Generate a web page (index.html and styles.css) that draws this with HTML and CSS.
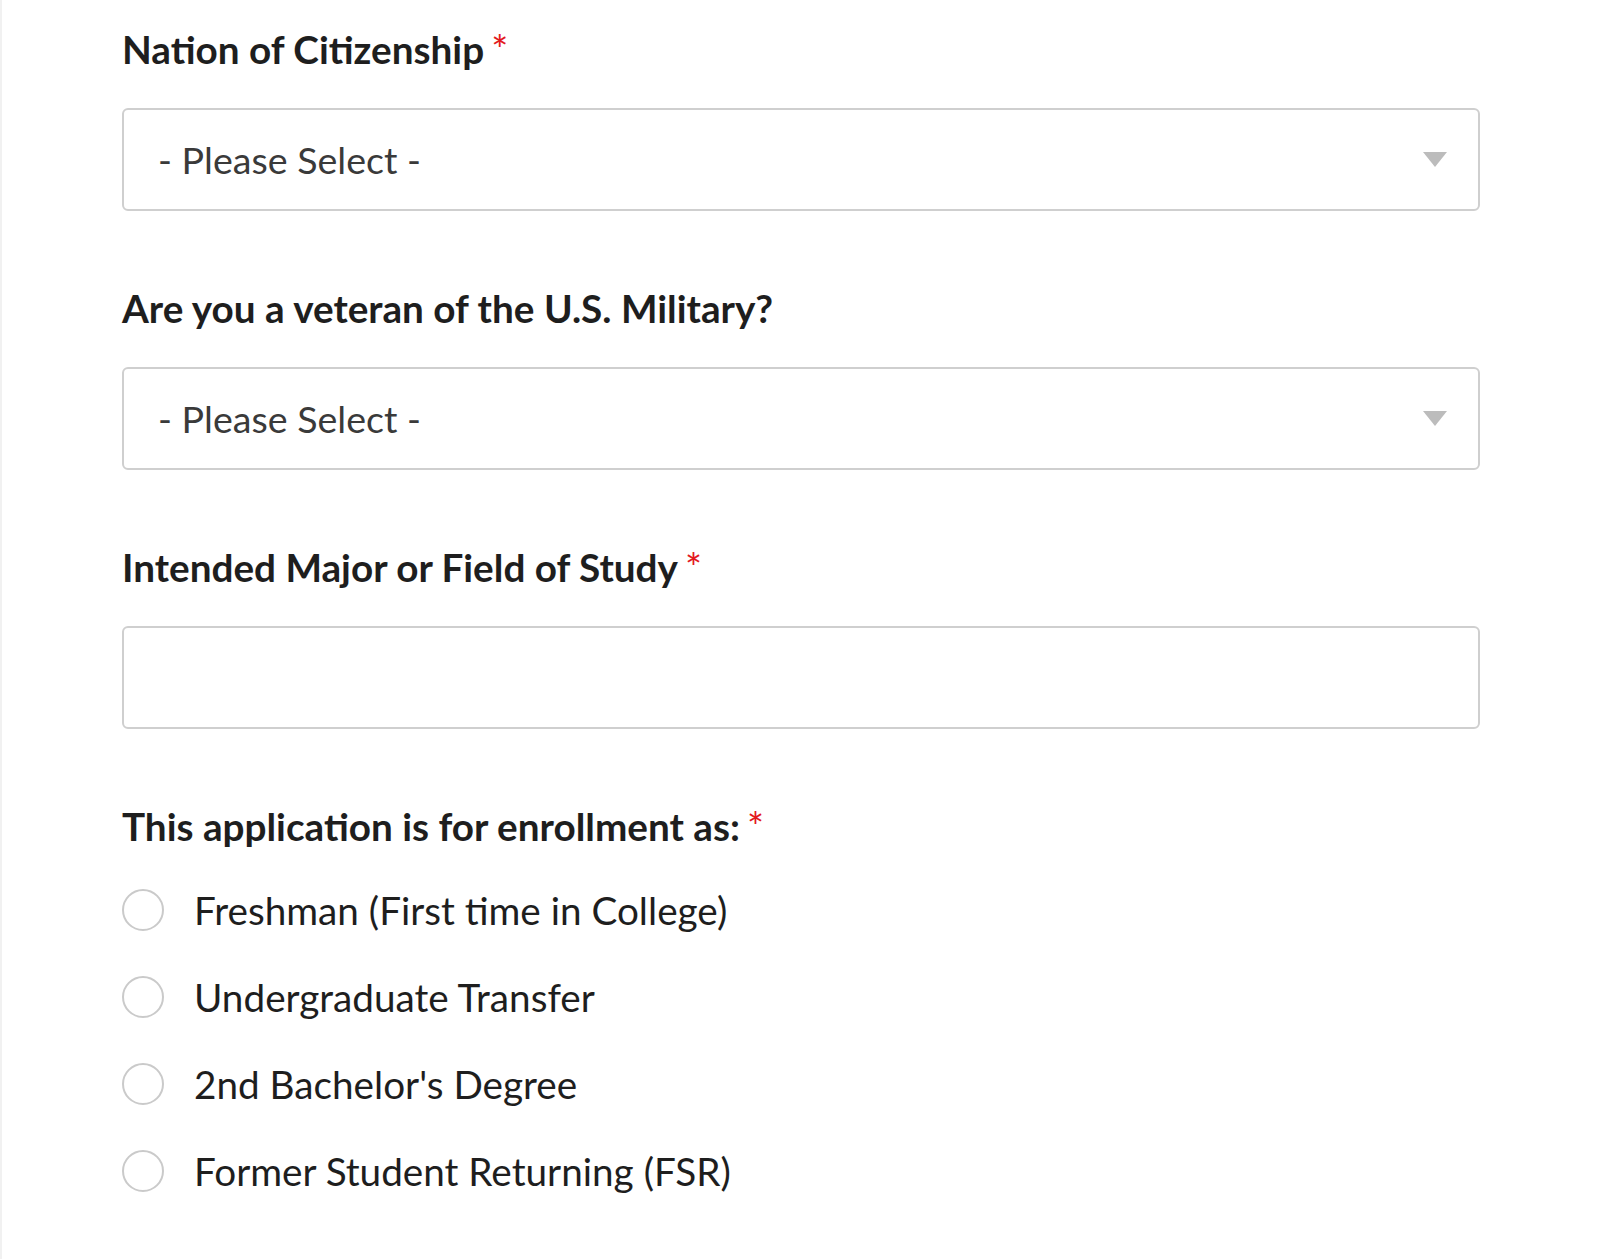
FILE: index.html
```html
<!DOCTYPE html>
<html>
<head>
<meta charset="utf-8">
<link rel="stylesheet" href="styles.css">
</head>
<body>
<div class="page">
  <form class="form">
    <div class="field">
      <label class="label">Nation of Citizenship<span class="req">*</span></label>
      <div class="select">
        <span class="select-text">- Please Select -</span>
        <span class="arrow"></span>
      </div>
    </div>
    <div class="field">
      <label class="label">Are you a veteran of the U.S. Military?</label>
      <div class="select">
        <span class="select-text">- Please Select -</span>
        <span class="arrow"></span>
      </div>
    </div>
    <div class="field">
      <label class="label">Intended Major or Field of Study<span class="req">*</span></label>
      <div class="input"></div>
    </div>
    <div class="field radios-field">
      <label class="label">This application is for enrollment as:<span class="req">*</span></label>
      <div class="radios">
        <div class="radio-row"><span class="radio"></span><span class="radio-text">Freshman (First time in College)</span></div>
        <div class="radio-row"><span class="radio"></span><span class="radio-text">Undergraduate Transfer</span></div>
        <div class="radio-row"><span class="radio"></span><span class="radio-text">2nd Bachelor's Degree</span></div>
        <div class="radio-row"><span class="radio"></span><span class="radio-text">Former Student Returning (FSR)</span></div>
      </div>
    </div>
  </form>
</div>
</body>
</html>
```
FILE: styles.css
```css
html, body {
  margin: 0;
  padding: 0;
  background: #fff;
}
body {
  font-family: Lato, "Open Sans", sans-serif;
  color: #222;
}
.page {
  width: 1600px;
  height: 1259px;
  box-sizing: border-box;
  border-left: 2px solid #f1f1f1;
  padding: 25px 0 0 120px;
  overflow: hidden;
}
.form {
  width: 1358px;
  display: flex;
  flex-direction: column;
}
.field {
  display: flex;
  flex-direction: column;
  margin-bottom: 73px;
}
.label {
  font-size: 38.7px;
  font-weight: 700;
  line-height: 48px;
  color: #1e1e1e;
  margin-bottom: 35px;
  white-space: nowrap;
}
.req {
  color: #e3191e;
  font-size: 40px;
  font-weight: 400;
  line-height: 1;
  vertical-align: top;
  position: relative;
  top: 5px;
  margin-left: 7px;
}
.select, .input {
  height: 103px;
  box-sizing: border-box;
  border: 2px solid #cfcfcf;
  border-radius: 6px;
  display: flex;
  align-items: center;
  justify-content: space-between;
  padding: 0 31px 0 34px;
}
.select-text {
  font-size: 37.6px;
  color: #3a3a3a;
  font-weight: 400;
}
.arrow {
  width: 0;
  height: 0;
  border-left: 12px solid transparent;
  border-right: 12px solid transparent;
  border-top: 15px solid #bcbcbc;
}
.radios-field .label {
  margin-bottom: 16px;
}
.radios {
  display: flex;
  flex-direction: column;
}
.radio-row {
  height: 87px;
  display: flex;
  align-items: center;
}
.radio {
  width: 42px;
  height: 42px;
  box-sizing: border-box;
  border: 2px solid #cacaca;
  border-radius: 50%;
  margin-right: 30px;
  flex: none;
}
.radio-text {
  font-size: 38.7px;
  color: #1e1e1e;
}
```
